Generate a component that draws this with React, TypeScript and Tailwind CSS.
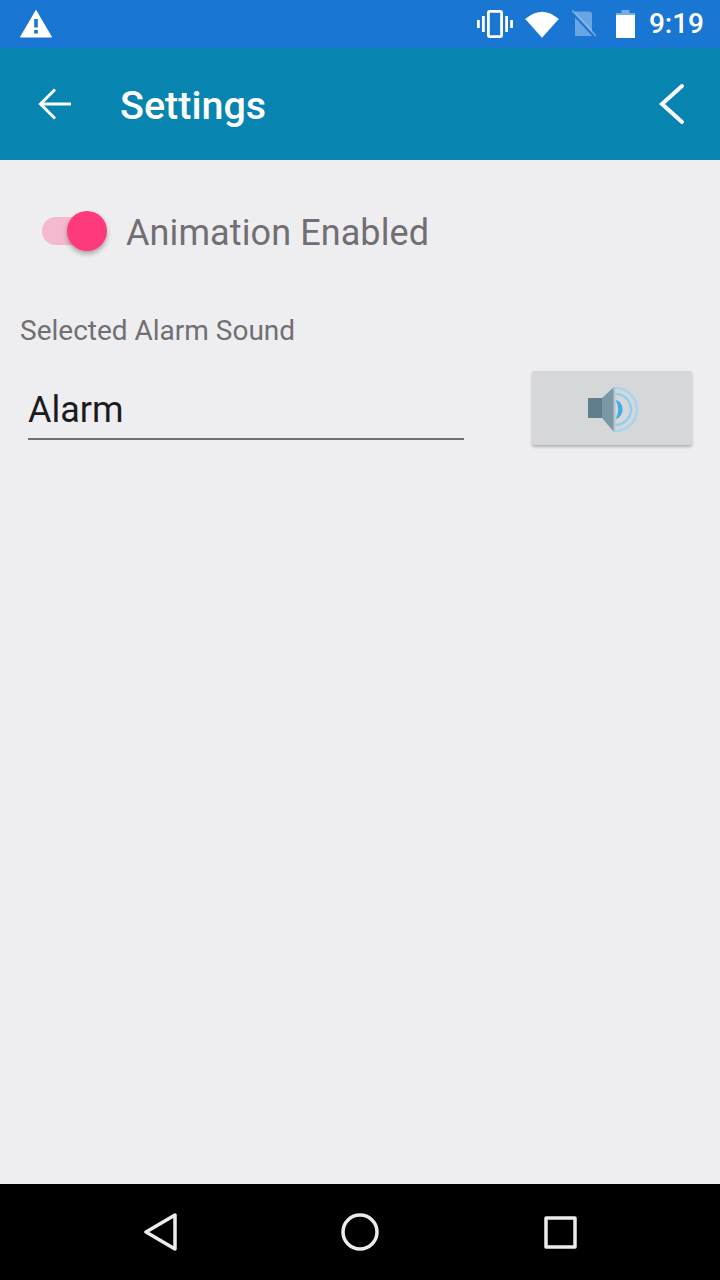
const font = { fontFamily: 'Roboto, sans-serif' };

function WarningIcon() {
  return (
    <svg width="32" height="28" viewBox="0 0 32 28" className="block">
      <path d="M16 0.5 L31.5 27 H0.5 Z" fill="#fff" stroke="#fff" strokeLinejoin="round" />
      <rect x="14.2" y="9" width="3.6" height="8.5" fill="#1976d2" />
      <rect x="14.2" y="20" width="3.6" height="3.6" fill="#1976d2" />
    </svg>
  );
}

function VibrateIcon() {
  return (
    <svg width="36" height="28" viewBox="0 0 36 28" fill="#fff" className="block">
      <rect x="0" y="10" width="2.8" height="8" />
      <rect x="5" y="6" width="2.8" height="16" />
      <rect x="28.2" y="6" width="2.8" height="16" />
      <rect x="33.2" y="10" width="2.8" height="8" />
      <rect x="11.4" y="1.4" width="13.2" height="25.2" rx="1.5" fill="none" stroke="#fff" strokeWidth="2.8" />
    </svg>
  );
}

function WifiIcon() {
  return (
    <svg width="34" height="28" viewBox="0 0 34 28" className="block">
      <path d="M0.5 9 Q17 -5 33.5 9 L17 27.5 Z" fill="#fff" stroke="#fff" strokeWidth="0.5" strokeLinejoin="round" />
    </svg>
  );
}

function NoSimIcon() {
  return (
    <svg width="24" height="28" viewBox="0 0 24 28" className="block">
      <path d="M3 1.5 H17 Q20 1.5 20 4.5 V26 H3 Z" fill="#fff" opacity="0.35" />
      <path d="M-1 1 L24 28" stroke="#1976d2" strokeWidth="3" />
      <path d="M-1 -1 L24 26" stroke="#fff" strokeWidth="1.8" opacity="0.35" />
    </svg>
  );
}

function BatteryIcon() {
  return (
    <svg width="19" height="28" viewBox="0 0 19 28" className="block">
      <path d="M5.5 0 H13.5 V3 H19 V28 H0 V3 H5.5 Z" fill="#fff" opacity="0.4" />
      <rect x="0" y="5" width="19" height="23" fill="#fff" />
    </svg>
  );
}

function SpeakerIcon() {
  return (
    <svg width="50" height="46" viewBox="0 0 50 46" className="block blur-[0.6px]">
      <rect x="0" y="11" width="14" height="20" fill="#5f7f8e" />
      <path d="M14 11 L26 0 V45 L14 31 Z" fill="#7b98a6" />
      <rect x="25.5" y="0" width="2" height="45" fill="#b9c7ce" />
      <path d="M27.5 1 A21.5 21.5 0 0 1 27.5 44" fill="none" stroke="#a5d5ef" strokeWidth="2.4" />
      <path d="M27.5 7 A15.5 15.5 0 0 1 27.5 38" fill="none" stroke="#8fd0f2" strokeWidth="2.4" />
      <path d="M27.5 13 C37 15 37 30 27.5 32 C31 26 31 19 27.5 13 Z" fill="#3fadea" />
    </svg>
  );
}

export default function App() {
  return (
    <div className="flex h-[1280px] w-[720px] flex-col overflow-hidden bg-[#eeeef0]" style={font}>
      {/* status bar */}
      <div className="flex h-12 shrink-0 items-center bg-[#1976d2] pl-5 pr-4 text-white">
        <WarningIcon />
        <div className="ml-auto flex items-center">
          <VibrateIcon />
          <div className="ml-3"><WifiIcon /></div>
          <div className="ml-[13px]"><NoSimIcon /></div>
          <div className="ml-5"><BatteryIcon /></div>
          <span className="ml-[14px] text-[28px] font-medium leading-none">9:19</span>
        </div>
      </div>

      {/* app bar */}
      <div className="flex h-[112px] shrink-0 items-center bg-[#0784b0] text-white">
        <svg width="34" height="32" viewBox="0 0 34 32" fill="none" stroke="#fff" strokeWidth="3" className="ml-[38px] block">
          <path d="M33 16 H3" />
          <path d="M17 1.5 L2.5 16 L17 30.5" />
        </svg>
        <span className="ml-[48px] pt-1 text-[39.5px] font-medium leading-none">Settings</span>
        <svg width="26" height="42" viewBox="0 0 26 42" fill="none" stroke="#fff" strokeWidth="4" strokeLinecap="round" className="ml-auto mr-[35px] block">
          <path d="M23 3 L3 21 L23 39" />
        </svg>
      </div>

      {/* content */}
      <div className="flex-1">
        <div className="mt-[53px] flex items-start">
          <div className="relative ml-[42px] mt-1 h-7 w-[58px] rounded-full bg-[#f4b9cf]">
            <div className="absolute left-[25px] top-[-6px] h-10 w-10 rounded-full bg-[#ff3a7c] shadow-[0_3px_5px_rgba(0,0,0,0.3)]" />
          </div>
          <span className="ml-[26px] mt-[2px] text-[36px] leading-none tracking-[0.1px] text-[#716f74]">Animation Enabled</span>
        </div>
        <div className="ml-5 mt-[66px] text-[28px] leading-none text-[#716f74]">Selected Alarm Sound</div>
        <div className="mt-[26px] flex items-start">
          <div className="ml-7 h-[69px] w-[436px] border-b-2 border-[#6f6e72] pt-[21px] text-[36px] leading-none text-[#1c1c1e]">Alarm</div>
          <div className="ml-[68px] flex h-[74px] w-[160px] items-center justify-center rounded-[3px] bg-[#d6d7d8] pl-[2px] pt-[3px] shadow-[0_2px_3px_rgba(0,0,0,0.25)]">
            <SpeakerIcon />
          </div>
        </div>
      </div>

      {/* nav bar */}
      <div className="flex h-24 shrink-0 items-center justify-between bg-black pl-[144px] pr-[143px]">
        <svg width="33" height="38" viewBox="0 0 33 38" fill="none" stroke="#ececec" strokeWidth="3.5" strokeLinejoin="round" className="block">
          <path d="M31 2 V36 L2 19 Z" />
        </svg>
        <svg width="38" height="38" viewBox="0 0 38 38" fill="none" stroke="#ececec" strokeWidth="3.5" className="-ml-[2px] block">
          <circle cx="19" cy="19" r="17" />
        </svg>
        <svg width="33" height="33" viewBox="0 0 33 33" fill="none" stroke="#ececec" strokeWidth="3.5" strokeLinejoin="round" className="block">
          <rect x="2" y="2" width="29" height="29" />
        </svg>
      </div>
    </div>
  );
}
